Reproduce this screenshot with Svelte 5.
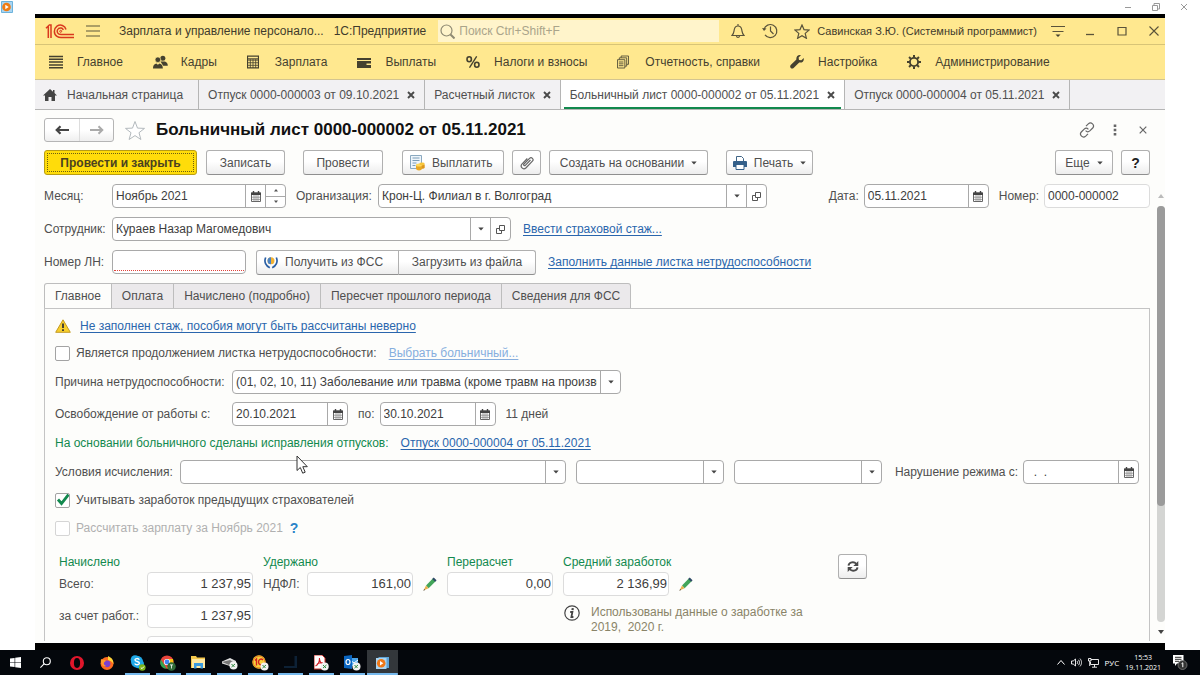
<script>
  const sections = [
    ['lines', 'Главное'],
    ['people', 'Кадры'],
    ['table', 'Зарплата'],
    ['wallet', 'Выплаты'],
    ['percent', 'Налоги и взносы'],
    ['docs', 'Отчетность, справки'],
    ['wrench', 'Настройка'],
    ['gear', 'Администрирование']
  ];

  const windows = [
    { title: 'Отпуск 0000-000003 от 09.10.2021' },
    { title: 'Расчетный листок' },
    { title: 'Больничный лист 0000-000002 от 05.11.2021', active: true },
    { title: 'Отпуск 0000-000004 от 05.11.2021' }
  ];

  const pages = ['Главное', 'Оплата', 'Начислено (подробно)', 'Пересчет прошлого периода', 'Сведения для ФСС'];

  const taskbar = [
    ['start', 'Пуск', false],
    ['search', 'Поиск', false],
    ['opera', 'Opera', false],
    ['firefox', 'Firefox', false],
    ['skype', 'Skype', true],
    ['chrome', 'Chrome', true],
    ['folder', 'Проводник', true],
    ['scanner', 'Сканер', true],
    ['onec', '1С', true],
    ['dark', 'Терминал', true],
    ['acrobat', 'Acrobat', true],
    ['outlook', 'Outlook', true],
    ['player', 'Проигрыватель', true]
  ];

  let page = $state('Главное');
  let continuation = $state(false);
  let previous = $state(true);
</script>

{#snippet icon(name)}
  {#if name === 'lines'}
    <svg width="14" height="14" viewBox="0 0 14 14" stroke="#45412f" stroke-width="1.5"><path d="M0 1.5h14M0 4.3h14M0 7.1h14M0 9.9h14M0 12.7h14" /></svg>
  {:else if name === 'people'}
    <svg width="15" height="14" viewBox="0 0 16 14" fill="#45412f"><circle cx="10.5" cy="3" r="2.7" /><path d="M8 6.5h4.5c2 .8 3.200 1.700 3.300 4.500h-5z" /><circle cx="5.200" cy="4.600" r="3" stroke="#ffe88f" stroke-width=".7" /><path d="M0 14c0-3 .8-4.600 3.500-5.400L5.200 10l1.800-1.400c2.600.8 3.500 2.400 3.500 5.400z" /></svg>
  {:else if name === 'table'}
    <svg width="12" height="14" viewBox="0 0 13 14" fill="none" stroke="#45412f"><path d="M.6.6h11.800v12.800H.6z" stroke-width="1.200" /><path d="M1 5h11M1 7.800h11M1 10.600h11M3.600 4v9.500M6.500 4v9.500M9.400 4v9.500" stroke-width=".9" /><path d="M1 3.600h11" stroke-width="1.200" /></svg>
  {:else if name === 'wallet'}
    <svg width="14" height="11" viewBox="0 0 14 11" fill="#45412f"><path d="M0 1h14v2H0zM0 4h14v2.500H9.500V8H14v3H0z" /></svg>
  {:else if name === 'percent'}
    <svg width="14" height="12" viewBox="0 0 14 12" fill="none" stroke="#45412f"><ellipse cx="3.200" cy="3.300" rx="2.200" ry="2.500" stroke-width="1.600" /><ellipse cx="10.800" cy="8.700" rx="2.200" ry="2.500" stroke-width="1.600" /><path d="M10.700.3 3.500 11.700" stroke-width="1.300" /></svg>
  {:else if name === 'docs'}
    <svg width="12" height="14" viewBox="0 0 13 14" fill="none" stroke="#55503a"><path d="M4.500 2.500V.5h8v9h-2M2.500 4.500v-2h8v9h-2M.5 4.500h8v9h-8z" /><path d="M2 7h5M2 9h5M2 11h5" /></svg>
  {:else if name === 'wrench'}
    <svg width="14" height="14" viewBox="0 0 14 14" fill="#45412f"><path d="M13.700 3.100 11.400 5.300 9 4.900 8.600 2.600 10.900.3C8.300-.5 5.900 1.500 6.400 4.500L.7 10.100c-1.700 1.800.9 4.700 2.900 2.900l5.600-5.500c3.200.6 5.200-1.700 4.500-4.400z" /></svg>
  {:else if name === 'gear'}
    <svg width="14" height="14" viewBox="0 0 14 14" fill="none" stroke="#45412f"><circle cx="7" cy="7" r="4.100" stroke-width="1.900" /><path d="M7 0v2.500M7 11.500V14M0 7h2.500M11.500 7H14M2.050 2.050l1.800 1.800M10.150 10.150l1.800 1.800M2.050 11.950l1.800-1.800M10.150 3.850l1.800-1.800" stroke-width="2" /></svg>
  {:else if name === 'calendar'}
    <svg width="10" height="11" viewBox="0 0 10 11"><path d="M.5 2h9v8.500h-9z" fill="#fff" stroke="#666" /><path d="M0 1.500h10V4H0z" fill="#444" /><path d="M2.500 0v2M7.500 0v2" stroke="#444" stroke-width="1.400" /><path d="M1 6.200h8M1 8.400h8M3 4v6M5 4v6M7 4v6" stroke="#8a8a8a" stroke-width=".8" /></svg>
  {:else if name === 'down'}
    <svg width="6" height="4" viewBox="0 0 6 4"><path d="M.3.5h5.400L3 3.500z" fill="#444" /></svg>
  {:else if name === 'open'}
    <svg width="9" height="9" viewBox="0 0 9 9" fill="none" stroke="#555"><path d="M3.500.5h5v5h-5z" /><path d="M3.500 3.500h-3v5h5v-3" /></svg>
  {:else if name === 'pencil'}
    <svg width="14" height="14" viewBox="0 0 14 14"><path d="m3 8.500 6.800-7 2.800 2.700-7 7z" fill="#43a55a" /><path d="m9.200 2 1.500-1.500 2.900 2.800-1.500 1.500z" fill="#2f4a66" /><path d="M3 8.500.5 13.500l5.100-2.300z" fill="#e9b04d" /><path d="m1.200 12.100-.9 1.700 1.800-.8z" fill="#444" /></svg>
  {:else if name === 'start'}
    <svg width="11" height="11" viewBox="0 0 11 11" fill="#fff"><path d="M0 1.500 4.600.9v4.300H0zM5.200.8 11 0v5.200H5.200zM0 5.800h4.600v4.300L0 9.500zM5.200 5.800H11V11l-5.800-.8z" /></svg>
  {:else if name === 'search'}
    <svg width="11" height="11" viewBox="0 0 11 11" fill="none" stroke="#fff" stroke-width="1.100"><circle cx="6.800" cy="4.200" r="3.500" /><path d="M4.300 6.700.4 10.600" /></svg>
  {:else if name === 'opera'}
    <svg width="14" height="14" viewBox="0 0 14 14"><circle cx="7" cy="7" r="7" fill="#e0162b" /><ellipse cx="7" cy="7" rx="3.100" ry="4.900" fill="#05070b" /></svg>
  {:else if name === 'firefox'}
    <svg width="14" height="14" viewBox="0 0 14 14"><circle cx="7" cy="7.500" r="6.500" fill="#ff6a1f" /><path d="M8 0c3.700 1.500 6 4.500 5.400 8.500C13 5.500 10 5 8 4z" fill="#ffd43a" /><circle cx="7" cy="7.800" r="3.400" fill="#7b3fd1" /><path d="M1 3c1.200 1 3.500.6 5 1.700L4.600 6C3 7 4 9.500 6.500 10 3 11.500 0 8 1 3z" fill="#ff9a2e" /></svg>
  {:else if name === 'skype'}
    <svg width="16" height="16" viewBox="0 0 16 16"><circle cx="5" cy="4.500" r="4.300" fill="#20a9e8" /><circle cx="9.500" cy="9" r="4.500" fill="#20a9e8" /><circle cx="7" cy="6.800" r="6" fill="#20a9e8" /><path d="M9.300 4.700C8.500 3.100 4.900 3.200 5 5c.1 1.800 4.500 1.300 4.400 3.300-.2 1.900-3.900 1.900-4.700.2" fill="none" stroke="#fff" stroke-width="1.400" /><circle cx="12.300" cy="12.500" r="3.300" fill="#7cb518" /><path d="m10.800 12.500 1.200 1.200 2-2.200" fill="none" stroke="#fff" /></svg>
  {:else if name === 'chrome'}
    <svg width="16" height="16" viewBox="0 0 16 16"><circle cx="7" cy="7" r="6.600" fill="#e8453c" /><path d="M.8 4.500 4.500 10l2 3.600C1 13.500-.8 8.500.8 4.500z" fill="#32a350" /><path d="M7 4h6c1.500 4.500-1.500 9.500-6.500 9.600L10 8z" fill="#fbc116" /><circle cx="7" cy="7" r="3.100" fill="#fff" /><circle cx="7" cy="7" r="2.400" fill="#4285f4" /><circle cx="11.500" cy="11.500" r="4.300" fill="#2f6b38" /><path d="M10 9.900h3M11.500 10v3.500" stroke="#fff" stroke-width=".8" /></svg>
  {:else if name === 'folder'}
    <svg width="15" height="13" viewBox="0 0 15 13"><path d="M0 0h5l1 1.500h8V12H0z" fill="#f5c84c" /><path d="M1 3h13v9H1z" fill="#ffe9a2" /><path d="M3 7h9v5.500H9.500V10h-4v2.500H3z" fill="#3a9be0" /></svg>
  {:else if name === 'scanner'}
    <svg width="17" height="14" viewBox="0 0 17 14"><path d="M1 5.500 9 2l6 3v3l-6 2-8-2.500z" fill="#ddd" /><path d="m1 6 8-2 3 2-4 3z" fill="#777" /><circle cx="12.500" cy="9.500" r="4" fill="#f2f2f2" /><path d="m10.500 8 3 3m-3 0 3.500-3" stroke="#2d8a3e" /></svg>
  {:else if name === 'onec'}
    <svg width="17" height="16" viewBox="0 0 17 16"><circle cx="7" cy="7" r="6.700" fill="#f7d13d" /><circle cx="7" cy="7" r="6" fill="none" stroke="#e87a20" /><path d="M3 5.500 4.500 4v6.500M11 5C9 3 6.500 4.500 6.500 7S9 10.500 11.500 9.500" fill="none" stroke="#d42020" stroke-width="1.400" /><circle cx="12.500" cy="11.500" r="4" fill="#f2f2f2" /><path d="m10.500 10 3 3m-3 0 3.500-3" stroke="#2d8a3e" /></svg>
  {:else if name === 'dark'}
    <svg width="13" height="13" viewBox="0 0 13 13"><path d="M10.500 0H13v12H0v-2h10.500z" fill="#0d2136" /></svg>
  {:else if name === 'acrobat'}
    <svg width="15" height="16" viewBox="0 0 15 16"><path d="M0 0h8l3 3v11H0z" fill="#fff" stroke="#c9302c" /><path d="M5.500 3c0 4-2 7-4 8M5.500 4C6 7 8 9 10 9M3 9c2-1 4-1.500 6-1" fill="none" stroke="#d11f26" stroke-width="1.100" /><circle cx="10.700" cy="11.500" r="4" fill="#f2f2f2" /><path d="m9 10 3 3m-3 0 3.500-3" stroke="#2d8a3e" /></svg>
  {:else if name === 'outlook'}
    <svg width="17" height="16" viewBox="0 0 17 16"><path d="M6 3h8v8H6z" fill="#4aa3e8" /><path d="m6 5 4 3 4-3" fill="none" stroke="#fff" /><path d="m0 1 8-1v14l-8-1z" fill="#0b66c2" /><ellipse cx="4" cy="7" rx="2" ry="2.500" fill="none" stroke="#fff" stroke-width="1.200" /><circle cx="12.500" cy="11.500" r="4" fill="#f2f2f2" /><path d="m10.500 10 3 3m-3 0 3.500-3" stroke="#2d8a3e" /></svg>
  {:else if name === 'player'}
    <svg width="13" height="12" viewBox="0 0 13 12"><path d="M2.500 0H13v11H2.500z" fill="#5ea4d8" /><path d="M0 1h10.500v11H0z" fill="#a9d5f2" /><circle cx="5.200" cy="6.200" r="4.300" fill="#f07818" /><path d="M4 4v4.400l3.300-2.200z" fill="#fff" /></svg>
  {/if}
{/snippet}

<div class="screen">
  <header class="player">
    <svg width="12" height="12" viewBox="0 0 12 12"><path d="M.5.500h11v11H.500z" fill="#a9d5f2" stroke="#6db3dc" /><circle cx="5.500" cy="6" r="4.300" fill="#f07c14" /><path d="M4.300 3.800v4.400l3.400-2.200z" fill="#fff" /></svg>
    <div class="player-buttons">
      <button aria-label="Свернуть проигрыватель"><svg width="8" height="8" viewBox="0 0 8 8" fill="none" stroke="#999"><path d="M1 4.500h6" /></svg></button>
      <button aria-label="Развернуть проигрыватель"><svg width="8" height="8" viewBox="0 0 8 8" fill="none" stroke="#999"><path d="M.5 2.500h5v5h-5zM2 2V.5h5.500V6H6" /></svg></button>
      <button aria-label="Закрыть проигрыватель"><svg width="8" height="8" viewBox="0 0 8 8" fill="none" stroke="#999"><path d="m1 1 6 6M7 1 1 7" /></svg></button>
    </div>
  </header>

  <div class="app">
    <div class="titlebar">
      <svg class="logo" width="29" height="15" viewBox="0 0 29 15" fill="none" stroke="#d9391e" stroke-width="1.500"><path d="M1 4.200 3.300 2v12M4 1h2v13" /><path d="M21 5.500C20 1.500 15.500-.2 12 2.200 8.500 4.800 8.500 10 12 12.400c1.300.9 2.500 1.100 4 1.100h13M18.300 6c-.8-2-3-2.600-4.700-1.500-1.900 1.300-1.900 4 0 5.300.8.500 1.600.6 2.600.6H29" /><circle cx="15.700" cy="7.300" r="1" stroke-width="1" /></svg>
      <button class="burger" aria-label="Меню"><svg width="14" height="12" viewBox="0 0 14 12" stroke="#5d563c" stroke-width="1.200"><path d="M0 1h14M0 6h14M0 11h14" /></svg></button>
      <span class="app-name">Зарплата и управление персонало...</span>
      <span class="platform">1С:Предприятие</span>
      <label class="search">
        <svg width="15" height="15" viewBox="0 0 15 15" fill="none" stroke="#8f8a73" stroke-width="1.200"><circle cx="6.500" cy="6.500" r="5.500" /><path d="m10.500 10.500 4 4" stroke-width="2" /></svg>
        <input type="search" placeholder="Поиск Ctrl+Shift+F" aria-label="Поиск" />
      </label>
      <div class="title-tools">
        <button aria-label="Уведомления"><svg width="14" height="16" viewBox="0 0 14 16" fill="none" stroke="#5a533a" stroke-width="1.200"><path d="M1 12.500c2-2 1.800-3.500 2.300-6C3.700 4.300 5 3 7 3s3.300 1.300 3.700 3.500c.5 2.500.3 4 2.300 6zM7 3V1M5.500 13c.3 1.800 2.700 1.800 3 0" /></svg></button>
        <button aria-label="История"><svg width="16" height="16" viewBox="0 0 16 16" fill="none" stroke="#5a533a" stroke-width="1.200"><path d="M2 6.500A6.500 6.500 0 1 1 3 11.800M8.500 3.500V8l3 3" /><path d="m0 5 2 3 2.500-2.500z" fill="#5a533a" stroke="none" /></svg></button>
        <button aria-label="Избранное"><svg width="16" height="15" viewBox="0 0 16 15" fill="none" stroke="#5a533a" stroke-width="1.200"><path d="m8 1 2 4.600 5 .5-3.800 3.300 1.200 4.900L8 11.700l-4.400 2.600 1.200-4.900L1 6.100l5-.5z" /></svg></button>
        <span class="user">Савинская З.Ю. (Системный программист)</span>
        <button aria-label="Сервис"><svg width="14" height="13" viewBox="0 0 14 13"><path d="M0 1.500h14M1.500 6.500h11" stroke="#5a533a" stroke-width="1.200" /><path d="M4.500 9.500h5L7 12z" fill="#45412f" /></svg></button>
        <button aria-label="Свернуть"><svg width="10" height="10" viewBox="0 0 10 10" stroke="#5a533a"><path d="M1 8.500h8" stroke-width="1.300" /></svg></button>
        <button aria-label="Развернуть"><svg width="10" height="10" viewBox="0 0 10 10" fill="none" stroke="#5a533a" stroke-width="1.200"><path d="M1 1.500h8v7.500H1z" /></svg></button>
        <button aria-label="Закрыть"><svg width="10" height="10" viewBox="0 0 10 10" stroke="#5a533a" stroke-width="1.100"><path d="m.5.500 9 9M9.500.500l-9 9" /></svg></button>
      </div>
    </div>

    <nav class="sections">
      {#each sections as [name, text]}
        <button><span class="section-icon">{@render icon(name)}</span>{text}</button>
      {/each}
    </nav>

    <nav class="windows">
      <button class="window home">
        <svg width="14" height="12" viewBox="0 0 14 12" fill="#444"><path d="M7 0 0 6.500h2V12h3.500V8h3v4H12V6.500h2L11.500 4V1H10v1.700z" /></svg>
        Начальная страница
      </button>
      {#each windows as w}
        <div class="window" class:current={w.active}>
          <button>{w.title}</button>
          <button aria-label="Закрыть {w.title}"><svg width="8" height="8" viewBox="0 0 8 8" stroke="#4a4a4a" stroke-width="1.900"><path d="m1 1 6 6M7 1 1 7" /></svg></button>
        </div>
      {/each}
    </nav>

    <main class="form">
      <div class="heading">
        <div class="history">
          <button aria-label="Назад"><svg width="14" height="10" viewBox="0 0 14 10" fill="none" stroke="#444" stroke-width="2.200"><path d="M14 5H2M5.500 1.200 1.700 5l3.800 3.800" /></svg></button>
          <button aria-label="Вперед"><svg width="14" height="10" viewBox="0 0 14 10" fill="none" stroke="#aaa" stroke-width="2"><path d="M0 5h12M8.500 1.200 12.300 5 8.500 8.800" /></svg></button>
        </div>
        <button class="plain" aria-label="В избранное"><svg width="22" height="21" viewBox="0 0 22 21" fill="#fff" stroke="#b3b9bd"><path d="m11 1.500 2.500 6.600 7 .3-5.500 4.300 1.900 6.800L11 15.600l-5.900 3.900L7 12.700 1.500 8.400l7-.3z" /></svg></button>
        <h1>Больничный лист 0000-000002 от 05.11.2021</h1>
        <div class="heading-tools">
          <button class="plain" aria-label="Получить ссылку"><svg width="16" height="16" viewBox="0 0 16 16" fill="none" stroke="#666" stroke-width="1.200"><path d="m7 4.200 2.300-2.300c2.800-2.600 6.900 1.100 4.400 4.100l-2.900 2.900c-1.300 1.200-3 1-4.200-.2M9 11.800l-2.300 2.300c-2.800 2.600-6.900-1.100-4.400-4.100l2.900-2.900c1.300-1.200 3-1 4.200.2" /></svg></button>
          <button class="plain" aria-label="Дополнительно"><svg width="4" height="12" viewBox="0 0 4 12" fill="#666"><path d="M.7.500h2.600v2.600H.7zM.7 4.700h2.600v2.600H.7zM.7 8.900h2.600v2.600H.7z" /></svg></button>
          <button class="plain" aria-label="Закрыть форму"><svg width="8" height="8" viewBox="0 0 8 8" stroke="#666" stroke-width="1.200"><path d="m.7.7 6.600 6.600M7.300.7.7 7.300" /></svg></button>
        </div>
      </div>

      <div class="commands">
        <button class="btn primary">Провести и закрыть</button>
        <button class="btn save">Записать</button>
        <button class="btn post">Провести</button>
        <button class="btn pay">
          <svg width="16" height="16" viewBox="0 0 16 16"><path d="M1.500.500h11v13h-11z" fill="#eef5fb" stroke="#8aa9c0" /><path d="M3.500 3h7M3.500 5.500h7M3.500 8h4M3.500 10.500h3" stroke="#7b9db8" /><path d="M7 10v3.500c0 2.500 6 2.500 6 0V10z" fill="#e9a824" /><ellipse cx="10" cy="10" rx="3" ry="1.500" fill="#ffd95a" /><path d="M13 9.500h2.700v3.200c-.6.900-1.700 1.200-2.700 1.100z" fill="#dc951c" /><ellipse cx="13" cy="9" rx="2.700" ry="1.400" fill="#f7c53b" /></svg>
          Выплатить
        </button>
        <button class="btn clip" aria-label="Присоединенные файлы"><svg width="14" height="14" viewBox="0 0 14 14" fill="none" stroke="#666" stroke-width="1.200"><path d="M10.500 4 5.300 9.300c-1 1-2.300-.3-1.300-1.300l5.500-5.600c2-1.900 4.800.8 2.900 2.800l-6.300 6.500c-3 2.800-6.600-.9-4-3.900l5.200-5.300" /></svg></button>
        <button class="btn based">Создать на основании {@render icon('down')}</button>
        <button class="btn print">
          <svg width="14" height="14" viewBox="0 0 14 14"><path d="M3.500 5V.500h5l2 2V5" fill="#fff" stroke="#3f6486" /><path d="M1 5h12q1 0 1 1v5H0V6q0-1 1-1z" fill="#35608a" /><path d="M3 8.500h8v5H3z" fill="#fff" stroke="#35608a" /></svg>
          Печать {@render icon('down')}
        </button>
        <button class="btn more">Еще {@render icon('down')}</button>
        <button class="btn help" aria-label="Справка">?</button>
      </div>

      <div class="body">
        <div class="content">
          <div class="row">
            <label class="caption" for="month">Месяц:</label>
            <div class="field month">
              <input id="month" value="Ноябрь 2021" />
              <button aria-label="Выбрать месяц">{@render icon('calendar')}</button>
              <div class="spin">
                <button aria-label="Следующий месяц"><svg width="4" height="3" viewBox="0 0 4 3"><path d="M2 0 4 2.500H0z" fill="#555" /></svg></button>
                <button aria-label="Предыдущий месяц"><svg width="4" height="3" viewBox="0 0 4 3"><path d="M0 .5h4L2 3z" fill="#555" /></svg></button>
              </div>
            </div>
            <label class="org-caption" for="org">Организация:</label>
            <div class="field org">
              <input id="org" value="Крон-Ц. Филиал в г. Волгоград" />
              <button aria-label="Выбрать организацию">{@render icon('down')}</button>
              <button aria-label="Открыть организацию">{@render icon('open')}</button>
            </div>
            <div class="row-end">
              <label for="date">Дата:</label>
              <div class="field date">
                <input id="date" value="05.11.2021" />
                <button aria-label="Выбрать дату">{@render icon('calendar')}</button>
              </div>
              <label class="gap-left" for="number">Номер:</label>
              <div class="field amount readonly"><input id="number" value="0000-000002" readonly /></div>
            </div>
          </div>

          <div class="row">
            <label class="caption" for="employee">Сотрудник:</label>
            <div class="field employee">
              <input id="employee" value="Кураев Назар Магомедович" />
              <button aria-label="Выбрать сотрудника">{@render icon('down')}</button>
              <button aria-label="Открыть сотрудника">{@render icon('open')}</button>
            </div>
            <a class="after" href="#experience">Ввести страховой стаж...</a>
          </div>

          <div class="row">
            <label class="caption" for="sheet">Номер ЛН:</label>
            <div class="field sheet required"><input id="sheet" /></div>
            <div class="group">
              <button class="btn fss">
                <svg width="14" height="14" viewBox="0 0 14 14" fill="none"><circle cx="7" cy="5.800" r="3.500" fill="#f2b233" /><path d="M7 2.300a3.500 3.500 0 0 0 0 7" fill="#4b83c3" /><path d="M1.700 2.500C-.3 7 2 11 5.800 12.700M12.300 2.500c2 4.500-.3 8.500-4.100 10.200" stroke="#2b5fa4" stroke-width="1.700" /></svg>
                Получить из ФСС
              </button>
              <button class="btn load">Загрузить из файла</button>
            </div>
            <a class="after" href="#fill">Заполнить данные листка нетрудоспособности</a>
          </div>

          <div class="pages" role="tablist">
            {#each pages as p}
              <button role="tab" aria-selected={page === p} class:selected={page === p} onclick={() => (page = p)}>{p}</button>
            {/each}
          </div>

          <section class="panel">
            <div class="line warning">
              <svg width="16" height="14" viewBox="0 0 16 14"><path d="M8 .8 15.300 13.300H.7z" fill="#f8cf2c" stroke="#c49a22" stroke-linejoin="round" /><path d="M8 4.500v4.500M8 10.200V12" stroke="#333" stroke-width="1.800" /></svg>
              <a href="#warning">Не заполнен стаж, пособия могут быть рассчитаны неверно</a>
            </div>

            <div class="line">
              <label class="check"><input type="checkbox" bind:checked={continuation} />Является продолжением листка нетрудоспособности:</label>
              <a class="after faded" href="#choose">Выбрать больничный...</a>
            </div>

            <div class="line tall">
              <label class="wide-caption" for="reason">Причина нетрудоспособности:</label>
              <div class="field reason">
                <select id="reason"><option>(01, 02, 10, 11) Заболевание или травма (кроме травм на производстве)</option></select>
                <span class="arrow">{@render icon('down')}</span>
              </div>
            </div>

            <div class="line">
              <label class="wide-caption" for="from">Освобождение от работы с:</label>
              <div class="field period"><input id="from" value="20.10.2021" /><button aria-label="Выбрать начало">{@render icon('calendar')}</button></div>
              <label class="to" for="to">по:</label>
              <div class="field period"><input id="to" value="30.10.2021" /><button aria-label="Выбрать окончание">{@render icon('calendar')}</button></div>
              <span class="days">11 дней</span>
            </div>

            <div class="line">
              <span class="green">На основании больничного сделаны исправления отпусков:</span>
              <a class="after" href="#vacation">Отпуск 0000-000004 от 05.11.2021</a>
            </div>

            <div class="line snug">
              <label class="cond-caption" for="cond">Условия исчисления:</label>
              <div class="conditions">
                <div class="field cond-main"><select id="cond"><option></option></select><span class="arrow">{@render icon('down')}</span></div>
                <div class="field cond"><select aria-label="Второе условие"><option></option></select><span class="arrow">{@render icon('down')}</span></div>
                <div class="field cond"><select aria-label="Третье условие"><option></option></select><span class="arrow">{@render icon('down')}</span></div>
              </div>
              <div class="row-end">
                <label for="violation">Нарушение режима с:</label>
                <div class="field period"><input id="violation" value="  .  ." /><button aria-label="Выбрать дату нарушения">{@render icon('calendar')}</button></div>
              </div>
            </div>

            <div class="line snug">
              <label class="check"><input type="checkbox" bind:checked={previous} />Учитывать заработок предыдущих страхователей</label>
            </div>

            <div class="line snug">
              <label class="check off"><input type="checkbox" disabled />Рассчитать зарплату за Ноябрь 2021</label>
              <button class="hint" aria-label="Подсказка">?</button>
            </div>

            <div class="totals">
              <div class="total accrued">
                <h2>Начислено</h2>
                <div class="pair"><label for="all">Всего:</label><div class="field amount readonly"><input id="all" value="1 237,95" readonly /></div></div>
                <div class="pair"><label for="employer">за счет работ.:</label><div class="field amount readonly"><input id="employer" value="1 237,95" readonly /></div></div>
                <div class="pair"><span></span><div class="field amount readonly"><input aria-label="За счет ФСС" readonly /></div></div>
              </div>
              <div class="total">
                <h2>Удержано</h2>
                <div class="pair tax"><label for="tax">НДФЛ:</label><div class="field amount readonly"><input id="tax" value="161,00" readonly /></div>
                  <button class="plain" aria-label="Изменить НДФЛ">{@render icon('pencil')}</button></div>
              </div>
              <div class="total">
                <h2><label for="recalc">Перерасчет</label></h2>
                <div class="field amount readonly"><input id="recalc" value="0,00" readonly /></div>
              </div>
              <div class="total average">
                <h2><label for="avg">Средний заработок</label></h2>
                <div class="pair"><div class="field amount readonly"><input id="avg" value="2 136,99" readonly /></div>
                  <button class="plain" aria-label="Изменить средний заработок">{@render icon('pencil')}</button></div>
                <div class="note">
                  <svg width="16" height="16" viewBox="0 0 16 16" fill="none" stroke="#444"><circle cx="8" cy="8" r="7.200" stroke-width="1.200" /><path d="M8.800 3.200 8.500 5.200" stroke-width="2.200" /><path d="M6.200 7h2.200l-1 5h2" stroke-width="1.800" /></svg>
                  <p>Использованы данные о заработке за 2019,&nbsp; 2020 г.</p>
                </div>
              </div>
              <button class="btn refresh" aria-label="Пересчитать"><svg width="12" height="11" viewBox="0 0 12 11" fill="none" stroke="#4a4a4a" stroke-width="1.900"><path d="M1.500 4.700C2 1 7 .3 9.300 2.800M10.500 6.300c-.5 3.700-5.500 4.400-7.800 1.900" /><path d="M11.300 0v5H6.300zM.7 11V6h5z" fill="#4a4a4a" stroke="none" /></svg></button>
            </div>

            <svg class="cursor" width="14" height="20" viewBox="0 0 14 20"><path d="M1 1v14.500l3.300-3 2.400 5.700 2.500-1-2.400-5.500h4.500z" fill="#fff" stroke="#333" /></svg>
          </section>
        </div>

        <div class="scroll" aria-hidden="true">
          <svg width="6" height="4" viewBox="0 0 6 4"><path d="M3 0 6 4H0z" fill="#bbb" /></svg>
          <div class="track"><div class="thumb"></div></div>
          <svg width="6" height="4" viewBox="0 0 6 4"><path d="M0 0h6L3 4z" fill="#444" /></svg>
        </div>
      </div>
    </main>
  </div>

  <footer class="taskbar">
    <div class="tasks">
      {#each taskbar as [name, title, running]}
        <button aria-label={title} class:running class:front={name === 'player'}>{@render icon(name)}</button>
      {/each}
    </div>
    <div class="tray">
      <svg width="8" height="5" viewBox="0 0 8 5" fill="none" stroke="#fff"><path d="m.5 4.500 3.500-4 3.500 4" /></svg>
      <svg width="11" height="9" viewBox="0 0 11 9" fill="none" stroke="#fff" stroke-width=".9"><path d="M.5 3h1.700L4.500 1v7L2.200 6H.5zM6 3c.7 1 .7 2 0 3M7.500 1.800c1.300 1.700 1.300 3.700 0 5.400M9 .6c2 2.400 2 5.400 0 7.800" /></svg>
      <svg width="11" height="10" viewBox="0 0 11 10" fill="none" stroke="#fff" stroke-width=".9"><path d="M3 1.500h7.500v5H2.500V4M6.500 6.500v2.500M4 9.200h5M.5.500h2.500v2.500H.5zM1.700 3v5" /></svg>
      <span>РУС</span>
      <div class="clock"><span>15:53</span><span>19.11.2021</span></div>
      <button aria-label="Уведомления Windows">
        <svg width="15" height="15" viewBox="0 0 15 15"><path d="M0 0h10.500v8.500H4L2 11V8.500H0z" fill="#fff" /><path d="M2 2.300h6.500M2 4.300h6.500M2 6.300h4" stroke="#111" stroke-width=".9" /><circle cx="9.500" cy="10" r="4.500" fill="#333" stroke="#888" stroke-width=".7" /><path d="m8.500 8.700 1.300-.9v4.400" fill="none" stroke="#fff" /></svg>
      </button>
    </div>
  </footer>
</div>

<style>
  :global(body) {
    margin: 0;
    background: #fff;
  }

  .screen {
    --text: #4f4f4f;
    --link: #2a66ad;
    --green: #12894e;
    --border: #a9a9a9;
    display: flex;
    flex-direction: column;
    height: 100vh;
    overflow: hidden;
    font-family: 'Liberation Sans', Arial, sans-serif;
    font-size: 12px;
    line-height: 16px;
    color: var(--text);
  }

  .screen * {
    box-sizing: border-box;
  }

  svg {
    display: block;
    flex: none;
  }

  button,
  input,
  select {
    font: inherit;
    color: inherit;
    margin: 0;
    padding: 0;
    border: 0;
    background: none;
    min-width: 0;
  }

  button {
    display: flex;
    align-items: center;
    justify-content: center;
    white-space: nowrap;
  }

  label,
  a,
  span {
    white-space: nowrap;
  }

  a {
    color: var(--link);
    text-decoration: underline;
    text-underline-offset: 2px;
  }

  /* Player window */
  .player {
    display: flex;
    align-items: center;
    justify-content: space-between;
    height: 14px;
    padding: 0 12px 0 1px;
    flex: none;
  }

  .player-buttons {
    display: flex;
    gap: 20px;
  }

  .app {
    display: flex;
    flex-direction: column;
    flex: 1;
    min-height: 0;
    margin: 0 35px;
    border-top: 4px solid #000;
    border-bottom: 7px solid #000;
    background: #fdfdfb;
  }

  .titlebar {
    display: flex;
    align-items: center;
    flex: none;
    height: 27px;
    padding-left: 10px;
    background: #ffe88f;
    border-bottom: 1px solid #d8c477;
    color: #3f3b2c;
  }

  .burger {
    margin: 0 19px 0 12px;
  }

  .platform {
    margin: 0 12px 0 10px;
  }

  .search {
    display: flex;
    align-items: center;
    flex: 1;
    gap: 4px;
    height: 22px;
    padding-left: 2px;
    background: #fff4cb;
  }

  .search input {
    flex: 1;
    outline: 0;
  }

  .search input::placeholder {
    color: #aaa48a;
    opacity: 1;
  }

  .title-tools {
    display: flex;
    align-items: center;
    gap: 10px;
    margin-left: 8px;
  }

  .title-tools button {
    width: 22px;
  }

  .user {
    margin-left: -6px;
    font-size: 11px;
  }

  .sections {
    display: flex;
    align-items: center;
    flex: none;
    gap: 30px;
    height: 35px;
    padding-left: 14px;
    background: #ffe88f;
    border-bottom: 1px solid #d3c490;
    color: #45412f;
  }

  .section-icon {
    display: flex;
    width: 28px;
  }

  .windows {
    display: flex;
    flex: none;
    height: 30px;
    background: #f2f1f3;
    border-bottom: 1px solid #b5b5b5;
  }

  .window {
    display: flex;
    align-items: center;
    gap: 8px;
    padding: 0 9px;
    border-right: 1px solid #b5b5b5;
  }

  .window.home {
    gap: 10px;
    padding: 0 15px 0 8px;
  }

  .window.current {
    background: linear-gradient(#12894e, #12894e) 3px 100% / calc(100% - 6px) 2px no-repeat #fff;
  }

  /* Document form */
  .form {
    display: flex;
    flex-direction: column;
    flex: 1;
    min-height: 0;
    padding: 8px 0 2px 9px;
  }

  .heading,
  .commands {
    display: flex;
    align-items: center;
    flex: none;
    margin-right: 15px;
  }

  .heading {
    height: 24px;
    margin-bottom: 8px;
  }

  .history {
    display: flex;
    margin-right: 10px;
    border: 1px solid #b5b5b5;
    border-radius: 3px;
    background: linear-gradient(#fff 50%, #efefef);
  }

  .history button {
    width: 34px;
    height: 22px;
  }

  .history button + button {
    border-left: 1px solid #ddd;
  }

  h1 {
    margin: 0 0 0 10px;
    font-size: 17px;
    line-height: 24px;
    font-weight: bold;
    color: #111;
    white-space: nowrap;
  }

  .heading-tools {
    display: flex;
    gap: 14px;
    margin-left: auto;
  }

  .heading-tools button {
    width: 14px;
  }

  .btn {
    flex: none;
    gap: 7px;
    height: 25px;
    border: 1px solid #b0b0b0;
    border-bottom-color: #8f8f8f;
    border-radius: 3px;
    background: linear-gradient(#fff 45%, #ededed);
  }

  .commands {
    margin-bottom: 9px;
  }

  .primary {
    width: 153px;
    margin-right: 9px;
    border-color: #b99e12;
    background: #ffdc0a;
    outline: 1px dotted #6d5e10;
    outline-offset: -4px;
    font-weight: bold;
    color: #4a4220;
  }

  .save {
    width: 79px;
    margin-right: 18px;
  }

  .post {
    width: 80px;
    margin-right: 19px;
  }

  .pay {
    justify-content: flex-start;
    width: 102px;
    margin-right: 8px;
    padding-left: 6px;
  }

  .clip,
  .help,
  .refresh {
    width: 29px;
  }

  .clip {
    margin-right: 8px;
  }

  .based {
    width: 159px;
    margin-right: 18px;
  }

  .print {
    width: 87px;
  }

  .more {
    width: 58px;
    margin: 0 8px 0 auto;
  }

  .help {
    font-size: 14px;
    font-weight: bold;
    color: #222;
  }

  .body {
    display: flex;
    flex: 1;
    min-height: 0;
  }

  .content {
    display: flex;
    flex-direction: column;
    flex: 1;
    min-width: 0;
    overflow: hidden;
  }

  .row {
    display: flex;
    align-items: center;
    flex: none;
    height: 24px;
    margin-bottom: 9px;
  }

  .row-end {
    display: flex;
    align-items: center;
    gap: 5px;
    margin-left: auto;
  }

  .gap-left {
    margin-left: 5px;
  }

  .caption {
    flex: none;
    width: 68px;
  }

  .org-caption {
    flex: none;
    width: 82px;
    margin-left: 10px;
  }

  .field {
    display: flex;
    position: relative;
    height: 24px;
    border: 1px solid var(--border);
    border-radius: 4px;
    background: #fff;
    overflow: hidden;
    color: #3d3d3d;
  }

  .field input,
  .field select {
    flex: 1;
    width: 0;
    padding: 0 3px;
    outline: 0;
    appearance: none;
    text-overflow: clip;
  }

  .field > button,
  .arrow {
    display: flex;
    align-items: center;
    justify-content: center;
    flex: none;
    width: 20px;
    border-left: 1px solid var(--border);
  }

  .arrow {
    pointer-events: none;
  }

  .readonly {
    border-color: #dcdcdc;
  }

  .month {
    flex: none;
    width: 174px;
  }

  .spin {
    display: flex;
    flex-direction: column;
    width: 20px;
    border-left: 1px solid var(--border);
  }

  .spin button {
    flex: 1;
  }

  .spin button + button {
    border-top: 1px solid var(--border);
  }

  .org {
    flex: 0 1 389px;
  }

  .date {
    width: 125px;
  }

  .amount {
    flex: none;
    width: 106px;
  }

  .employee {
    flex: 0 1 399px;
  }

  .sheet {
    width: 134px;
    margin-right: 10px;
  }

  .required input {
    margin: 0 1px 2px;
    border-bottom: 1px dotted #e0433a;
  }

  .after {
    margin-left: 12px;
  }

  .group {
    display: flex;
  }

  .fss {
    justify-content: flex-start;
    width: 143px;
    padding-left: 7px;
    border-radius: 3px 0 0 3px;
  }

  .load {
    width: 138px;
    margin-left: -1px;
    border-radius: 0 3px 3px 0;
  }

  .pages {
    display: flex;
    flex: none;
    height: 26px;
  }

  .pages button {
    padding: 0 10px;
    border: 1px solid #bdbdbd;
    border-left-width: 0;
    background: #ebe9eb;
  }

  .pages button:first-child {
    border-left-width: 1px;
    border-top-left-radius: 3px;
  }

  .pages button:last-child {
    border-top-right-radius: 3px;
  }

  .pages .selected {
    position: relative;
    border-bottom-color: #fdfdfb;
    background: #fdfdfb;
  }

  .panel {
    position: relative;
    flex: 1;
    min-height: 0;
    margin-top: -1px;
    padding: 5px 10px 0;
    border: 1px solid #c4c4c4;
    border-bottom: 0;
  }

  .line {
    display: flex;
    align-items: center;
    height: 24px;
    margin-bottom: 5px;
  }

  .line.warning {
    gap: 9px;
    margin-bottom: 3px;
  }

  .line.tall {
    margin-bottom: 8px;
  }

  .line.snug {
    margin-bottom: 4px;
  }

  .check {
    display: flex;
    align-items: center;
    gap: 6px;
  }

  .check input {
    flex: none;
    width: 15px;
    height: 15px;
    appearance: none;
    border: 1px solid #a3a3a3;
    border-radius: 2px;
    background: #fff;
  }

  .check input:checked {
    background: #fff url("data:image/svg+xml,%3Csvg xmlns='http://www.w3.org/2000/svg' viewBox='0 0 13 13'%3E%3Cpath d='M2 5.500l3.500 4L12.500.5' fill='none' stroke='%2312894e' stroke-width='2.800'/%3E%3C/svg%3E");
  }

  .off {
    color: #b0b0b0;
  }

  .off input {
    border-color: #d5d5d5;
  }

  .faded {
    color: #86aede;
  }

  .wide-caption {
    flex: none;
    width: 177px;
  }

  .reason {
    flex: 0 1 389px;
  }

  .period {
    flex: none;
    width: 116px;
  }

  .to {
    margin: 0 5px 0 10px;
  }

  .days {
    margin-left: 10px;
  }

  .green,
  h2 {
    color: var(--green);
  }

  .cond-caption {
    flex: none;
    width: 125px;
  }

  .conditions {
    display: flex;
    flex: 0 1 702px;
    gap: 10px;
    min-width: 0;
  }

  .cond-main {
    flex: 387 0 0;
  }

  .cond {
    flex: 147 0 0;
  }

  .hint {
    margin-left: 7px;
    font-size: 14px;
    font-weight: bold;
    color: #2a84c8;
  }

  .totals {
    display: flex;
    align-items: flex-start;
    gap: 10px;
    padding: 10px 4px 0;
  }

  .total {
    display: flex;
    flex-direction: column;
    gap: 8px;
  }

  h2 {
    margin: 0 0 -6px;
    font-size: 12px;
    line-height: 16px;
    font-weight: normal;
  }

  .totals .amount input {
    padding: 0 1px;
    font-size: 13px;
    text-align: right;
  }

  .pair {
    display: flex;
    align-items: center;
  }

  .accrued .pair > :first-child {
    width: 88px;
  }

  .tax label {
    width: 44px;
  }

  .pair .plain {
    margin: 0 0 0 10px;
  }

  .average {
    width: 265px;
  }

  .note {
    display: flex;
    gap: 11px;
    margin: 1px 0 0 1px;
    color: #8a8468;
  }

  .note p {
    margin: 0;
    line-height: 15px;
  }

  .cursor {
    position: absolute;
    left: 251px;
    top: 146px;
  }

  .scroll {
    display: flex;
    flex-direction: column;
    align-items: center;
    gap: 8px;
    width: 8px;
    margin-left: 7px;
    padding: 10px 0 7px;
  }

  .track {
    flex: 1;
    width: 8px;
    border-radius: 4px;
    background: #d4d5d3;
  }

  .thumb {
    height: 72%;
    border-radius: 4px;
    background: #9b9b9b;
  }

  /* Desktop taskbar */
  .taskbar {
    display: flex;
    justify-content: space-between;
    flex: none;
    height: 25px;
    background: #04070c;
    color: #fff;
  }

  .tasks {
    display: flex;
    width: 398px;
  }

  .tasks button {
    flex: 1;
  }

  .tasks .running {
    background: linear-gradient(#76b9ed, #76b9ed) 50% 100% / 25px 2px no-repeat;
  }

  .tasks .front {
    background-color: #33373b;
    background-size: 100% 2px;
  }

  .tray {
    display: flex;
    align-items: center;
    gap: 6px;
    padding-right: 12px;
    font-family: 'Open Sans', sans-serif;
    font-size: 8px;
    line-height: 10px;
  }

  .clock {
    display: flex;
    flex-direction: column;
    align-items: center;
    font-size: 7px;
  }

  .tray button {
    margin-left: 6px;
  }
</style>
